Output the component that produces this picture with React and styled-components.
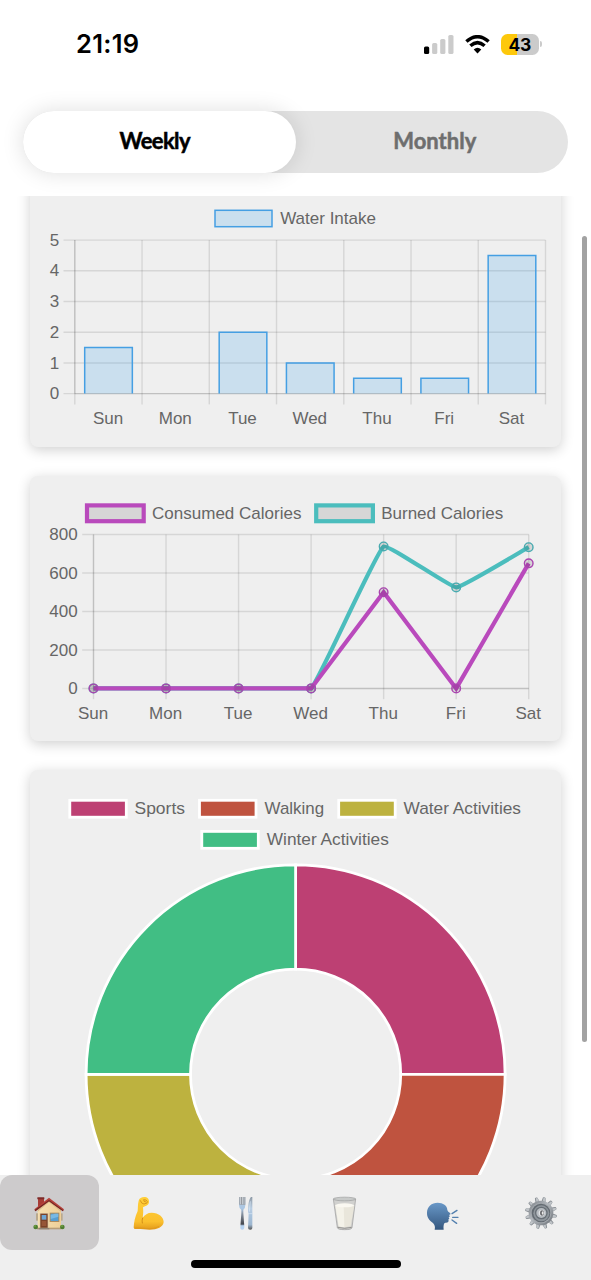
import React from "react";
import styled, { createGlobalStyle } from "styled-components";

const GlobalStyle = createGlobalStyle`
  * { box-sizing: border-box; }
  body { margin: 0; background: #fff; }
`;

const Screen = styled.div`
  position: relative;
  display: flex;
  flex-direction: column;
  width: 591px;
  height: 1280px;
  overflow: hidden;
  background: #fff;
  font-family: "Liberation Sans", Arial, sans-serif;
`;

const StatusBar = styled.header`
  display: flex;
  flex: none;
  align-items: center;
  justify-content: space-between;
  height: 88px;
  padding: 0 49px 0 76px;
`;

const Clock = styled.span`
  font: 600 25.5px/30px Inter, sans-serif;
  letter-spacing: 0.3px;
  color: #000;
`;

const StatusIcons = styled.div`
  display: flex;
  align-items: center;
  gap: 11px;
  svg { display: block; }
`;

const Battery = styled.div`
  display: flex;
  align-items: center;
  gap: 1.5px;
`;

const BatteryBody = styled.div`
  width: 37.5px;
  height: 21px;
  border-radius: 6.5px;
  background: linear-gradient(to right, #fdc80b ${(p) => p.$level}%, #cbcbcb ${(p) => p.$level}%);
  font: 700 17.5px/21px Inter, sans-serif;
  letter-spacing: -0.3px;
  text-align: center;
  color: #000;
`;

const BatteryCap = styled.div`
  width: 2px;
  height: 6px;
  border-radius: 0 2px 2px 0;
  background: #cbcbcb;
`;

const Toggle = styled.div`
  display: flex;
  flex: none;
  width: 545px;
  height: 62px;
  margin: 23px 0 22.5px 23px;
  border-radius: 31px;
  background: #e4e4e4;
`;

const ToggleOption = styled.button`
  flex: none;
  width: 50%;
  padding: ${(p) => (p.$active ? "0 9px 2px 0" : "0 0 2px 6px")};
  border: 0;
  border-radius: 31px;
  background: ${(p) => (p.$active ? "#fff" : "transparent")};
  box-shadow: ${(p) => (p.$active ? "0 0 22px rgba(0, 0, 0, 0.13)" : "none")};
  color: ${(p) => (p.$active ? "#000" : "#6e6e6e")};
  font: 700 22px/30px Lato, sans-serif;
  letter-spacing: ${(p) => (p.$active ? -0.6 : 0)}px;
  -webkit-text-stroke: 0.5px currentColor;
`;

const ScrollPane = styled.main`
  flex: 1;
  min-height: 0;
  overflow: hidden;
`;

const CardList = styled.div`
  display: flex;
  flex-direction: column;
  gap: 29.1px;
  margin-top: -14.2px;
  padding: 0 30px;
`;

const Card = styled.section`
  flex: none;
  height: ${(p) => p.$height}px;
  border-radius: 8px;
  background: #efefef;
  box-shadow: 0 3px 13px rgba(0, 0, 0, 0.19);
`;

const Chart = styled.svg`
  display: block;
  overflow: visible;
  font-family: "Liberation Sans", Arial, sans-serif;
  font-size: 17px;
  fill: #666;
`;

const ScrollThumb = styled.div`
  position: absolute;
  top: 235.5px;
  right: 4.5px;
  width: 4.5px;
  height: 806px;
  border-radius: 3px;
  background: #a2a2a2;
`;

const TabBar = styled.nav`
  display: flex;
  flex: none;
  flex-direction: column;
  align-items: center;
  justify-content: space-between;
  height: 105.5px;
  padding-bottom: 12px;
  background: #efefef;
`;

const Tabs = styled.div`
  display: flex;
  width: 100%;
`;

const Tab = styled.button`
  display: flex;
  flex: 1;
  align-items: center;
  justify-content: center;
  height: 75px;
  padding: 0;
  border: 0;
  border-radius: 12px;
  background: ${(p) => (p.$active ? "#cdcbcc" : "transparent")};
`;

const TabIcon = styled.svg`
  width: 34px;
  height: 34px;
  overflow: visible;
`;

const HomeIndicator = styled.div`
  width: 210px;
  height: 8px;
  border-radius: 4px;
  background: #000;
`;

const DAYS = ["Sun", "Mon", "Tue", "Wed", "Thu", "Fri", "Sat"];
const GRID = "rgba(0,0,0,0.1)";

function LegendItem({ x, y, w, h, fill, stroke, strokeWidth, label, labelX, labelWidth }) {
  return (
    <g>
      <rect x={x} y={y} width={w} height={h} fill={fill} stroke={stroke} strokeWidth={strokeWidth} />
      <text x={labelX} y={y + h / 2 + 5.6} textLength={labelWidth} lengthAdjust="spacingAndGlyphs">
        {label}
      </text>
    </g>
  );
}

function Grid({ area, columns, rows, max, labelGap }) {
  const { left, right, top, bottom } = area;
  return (
    <g stroke={GRID} strokeWidth="1.45">
      {Array.from({ length: columns + 1 }, (_, i) => {
        const x = left + ((right - left) * i) / columns;
        return <line key={i} x1={x} x2={x} y1={top} y2={bottom + 10.8} />;
      })}
      <line x1={left} x2={left} y1={top} y2={bottom} />
      <line x1={left} x2={right} y1={bottom} y2={bottom} />
      {Array.from({ length: rows + 1 }, (_, i) => {
        const y = bottom - ((bottom - top) * i) / rows;
        return (
          <g key={i}>
            <line x1={left - 11.3} x2={right} y1={y} y2={y} />
            <text x={left - labelGap} y={y + 5.6} textAnchor="end" stroke="none">
              {(max * i) / rows}
            </text>
          </g>
        );
      })}
    </g>
  );
}

function WaterChart() {
  const area = { left: 44.8, right: 515.5, top: 59.1, bottom: 212.6 };
  const values = [1.5, 0, 2, 1, 0.5, 0.5, 4.5];
  const col = (area.right - area.left) / values.length;
  const unit = (area.bottom - area.top) / 5;
  return (
    <Chart width="531" height="265">
      <LegendItem x={185} y={29.3} w={57} h={16.4} fill="rgba(54,162,235,0.2)" stroke="#459fe3"
        strokeWidth="1.5" label="Water Intake" labelX={250.2} labelWidth={95.8} />
      <Grid area={area} columns={7} rows={5} max={5} labelGap={15.6} />
      {values.map((v, i) => {
        const x = area.left + col * i + 9.9;
        const w = col - 19.6;
        const y = area.bottom - v * unit;
        return (
          <g key={DAYS[i]}>
            {v > 0 && (
              <>
                <rect x={x} y={y} width={w} height={area.bottom - y} fill="rgba(54,162,235,0.2)" />
                <path d={`M${x} ${area.bottom}V${y}H${x + w}V${area.bottom}`} fill="none" stroke="#459fe3" strokeWidth="1.5" />
              </>
            )}
            <text x={area.left + col * (i + 0.5) - 0.4} y={242.8} textAnchor="middle">{DAYS[i]}</text>
          </g>
        );
      })}
    </Chart>
  );
}

function smoothPath(points, area, tension) {
  const clampY = (y) => Math.min(area.bottom, Math.max(area.top, y));
  const controls = points.map((p, i) => {
    const prev = points[i - 1] || p;
    const next = points[i + 1] || p;
    const d0 = Math.hypot(p[0] - prev[0], p[1] - prev[1]);
    const d1 = Math.hypot(next[0] - p[0], next[1] - p[1]);
    const a = (tension * d0) / (d0 + d1);
    const b = (tension * d1) / (d0 + d1);
    const dx = next[0] - prev[0];
    const dy = next[1] - prev[1];
    return [p[0] - a * dx, clampY(p[1] - a * dy), p[0] + b * dx, clampY(p[1] + b * dy)];
  });
  return points
    .map((p, i) =>
      i === 0
        ? `M${p[0]} ${p[1]}`
        : `C${controls[i - 1][2]} ${controls[i - 1][3]} ${controls[i][0]} ${controls[i][1]} ${p[0]} ${p[1]}`
    )
    .join("");
}

function CaloriesChart() {
  const area = { left: 63.5, right: 498.7, top: 58.5, bottom: 212.4 };
  const series = [
    { color: "#4bbdbd", tension: 0.08, values: [0, 0, 0, 0, 738, 525, 734] },
    { color: "#b94abc", tension: 0, values: [0, 0, 0, 0, 500, 0, 650] },
  ].map((s) => ({
    ...s,
    points: s.values.map((v, i) => [
      area.left + ((area.right - area.left) * i) / 6,
      area.bottom - ((area.bottom - area.top) * v) / 800,
    ]),
  }));
  return (
    <Chart width="531" height="265">
      <LegendItem x={57} y={29.4} w={56.7} h={15.8} fill="rgba(0,0,0,0.1)" stroke="#b94abc"
        strokeWidth="4.2" label="Consumed Calories" labelX={122} labelWidth={149.5} />
      <LegendItem x={286.2} y={29.4} w={56.7} h={15.8} fill="rgba(0,0,0,0.1)" stroke="#4bbdbd"
        strokeWidth="4.2" label="Burned Calories" labelX={351.2} labelWidth={122} />
      <Grid area={area} columns={6} rows={4} max={800} labelGap={15.8} />
      {series.map((s) => (
        <g key={s.color} stroke={s.color}>
          <path d={smoothPath(s.points, area, s.tension)} fill="none" strokeWidth="4.2" strokeLinejoin="miter" />
          {s.points.map(([x, y]) => (
            <g key={x}>
              <circle cx={x} cy={y} r="4.3" fill="rgba(0,0,0,0.1)" strokeWidth="1.4" />
              <circle cx={x} cy={y} r="4.3" fill="none" stroke="rgba(70,50,90,0.14)" strokeWidth="1.2" />
            </g>
          ))}
        </g>
      ))}
      {DAYS.map((d, i) => (
        <text key={d} x={area.left + ((area.right - area.left) * i) / 6 - 0.4} y={242.5} textAnchor="middle">{d}</text>
      ))}
    </Chart>
  );
}

const ACTIVITIES = [
  { label: "Sports", color: "#bd4073", x: 39.8, y: 30.3, labelX: 104.5, labelWidth: 50.5 },
  { label: "Walking", color: "#bf533f", x: 169.5, y: 30.3, labelX: 234.6, labelWidth: 59.5 },
  { label: "Water Activities", color: "#bdb23f", x: 308.7, y: 30.3, labelX: 373.5, labelWidth: 117.5 },
  { label: "Winter Activities", color: "#41be84", x: 171.8, y: 61.4, labelX: 236.8, labelWidth: 122 },
];

function ActivityChart() {
  const cx = 265.6;
  const cy = 304.3;
  const outer = 209.5;
  const inner = 105.1;
  const at = (r, quarter) => {
    const a = ((quarter - 1) * Math.PI) / 2;
    return `${cx + r * Math.cos(a)} ${cy + r * Math.sin(a)}`;
  };
  return (
    <Chart width="531" height="540">
      {ACTIVITIES.map((a) => (
        <LegendItem key={a.label} {...a} w={56.5} h={16.9} fill={a.color} stroke="#fff" strokeWidth="2.8" />
      ))}
      {ACTIVITIES.map((a, i) => (
        <path
          key={a.label}
          d={`M${at(outer, i)}A${outer} ${outer} 0 0 1 ${at(outer, i + 1)}L${at(inner, i + 1)}A${inner} ${inner} 0 0 0 ${at(inner, i)}Z`}
          fill={a.color}
          stroke="#fff"
          strokeWidth="2.8"
        />
      ))}
    </Chart>
  );
}

function HouseIcon() {
  return (
    <TabIcon viewBox="0 0 102 102">
      <defs>
        <linearGradient id="wall" x2="1" y2="0"><stop stopColor="#f6dfb0" /><stop offset="1" stopColor="#eecf98" /></linearGradient>
      </defs>
      <rect x="18" y="9" width="18" height="27" fill="#a83c35" />
      <rect x="16" y="7" width="21" height="6" rx="1" fill="#7f2b29" />
      <path d="M17 43 51 15 87 43V101H17Z" fill="url(#wall)" />
      <path d="M17 50 51 22 87 50V43L51 15 17 43Z" fill="#d9b98b" />
      <path d="M51 8 96 43 93 49 51 19 10 49 7 43Z" fill="#b5413b" />
      <path d="M10 49 51 19 93 49 94 46 51 15 8 45Z" fill="#722622" />
      <rect x="12" y="55" width="6" height="22" fill="#b9a98e" />
      <rect x="87" y="55" width="5" height="22" fill="#b9a98e" />
      <rect x="23" y="54" width="26" height="46" fill="#dbc6a2" />
      <rect x="25" y="56" width="22" height="43" fill="#7a4228" />
      <rect x="29" y="60" width="14" height="14" fill="#6da5d4" />
      <rect x="29" y="78" width="14" height="15" fill="#965536" />
      <rect x="53" y="53" width="29" height="28" fill="#ad8a5c" />
      <rect x="56" y="56" width="23" height="22" fill="#569ed3" />
      <path d="M56 60 69 56H79V65L56 72Z" fill="#78b8e4" />
      <path d="M15 98H88V103H15Z" fill="#b69c78" />
      <path d="M20 99H52V103H20Z" fill="#8f8375" />
      <ellipse cx="11" cy="96" rx="7" ry="7" fill="#4e7e31" />
      <ellipse cx="91" cy="96" rx="7" ry="7" fill="#4e7e31" />
      <circle cx="9" cy="93" r="3" fill="#709f43" />
      <circle cx="90" cy="93" r="3" fill="#709f43" />
    </TabIcon>
  );
}

function ArmIcon() {
  return (
    <TabIcon viewBox="1 0 102 102">
      <defs>
        <linearGradient id="skin" x2="0" y2="1"><stop stopColor="#ffcf38" /><stop offset=".75" stopColor="#fbc02e" /><stop offset="1" stopColor="#e29a1b" /></linearGradient>
      </defs>
      <path d="M24 17C26 9 34 5 44 6C51 7 55 12 55 19C56 27 51 32 43 34L37 37C38 48 38 57 36 68C42 59 51 53 63 53C84 53 99 66 99 81C98 96 80 104 57 104C43 104 30 101 12 102Q9 101 9 97C10 80 13 65 21 48C22 36 21 29 24 17Z" fill="url(#skin)" />
      <path d="M29 17Q32 27 40 27L49 24Q52 19 46 15L39 14Q38 21 45 21" fill="none" stroke="#d18b18" strokeWidth="2.4" strokeLinecap="round" />
      <path d="M36 69C34 74 34 79 35 84" fill="none" stroke="#c77f12" strokeWidth="2.4" strokeLinecap="round" />
      <path d="M12 99C35 96 61 108 85 94" fill="none" stroke="#dc941d" strokeWidth="2" />
    </TabIcon>
  );
}

function CutleryIcon() {
  return (
    <TabIcon viewBox="0 0 102 102">
      <defs>
        <linearGradient id="handle" x2="0" y2="1"><stop stopColor="#b8c9da" /><stop offset=".36" stopColor="#a9c6e4" /><stop offset=".5" stopColor="#8996a5" /><stop offset=".83" stopColor="#44474d" /><stop offset=".88" stopColor="#b6d2ef" /></linearGradient>
        <linearGradient id="blade" x2="0" y2="1"><stop stopColor="#8e9aa6" /><stop offset=".35" stopColor="#b9cde2" /><stop offset=".55" stopColor="#a9c3dd" /><stop offset=".85" stopColor="#9db6cf" /><stop offset="1" stopColor="#555" /></linearGradient>
      </defs>
      <path d="M31 6H34V28H36V6H39V28H41V6H44V28H46V6H49V31Q49 40 43 44V54L46 95Q46 104 40 104Q33 104 34 95L37 54V44Q30 40 30 31Z" fill="url(#handle)" />
      <path d="M31 6H34V28H36V6H39V28H41V6H44V28H46V6H49V29H31Z" fill="#979ba0" />
      <path d="M70 6V99Q70 104 64 104Q57 104 57 98L59 55L57 51C57 34 59 12 66 6Z" fill="url(#blade)" />
      <path d="M61 50 64 19M59 56H70" stroke="#d8e8f7" strokeWidth="2" />
    </TabIcon>
  );
}

function MilkIcon() {
  return (
    <TabIcon viewBox="2 0 102 102">
      <path d="M18 12 30 98Q31 104 52 104Q73 104 74 98L85 12Z" fill="#d1d1cf" stroke="#989898" strokeWidth="2" />
      <path d="M24 31 34 94Q52 99 70 94L81 31Z" fill="#e9e6db" />
      <path d="M24 31 34 94Q42 97 51 97L49 31Z" fill="#f4f2e9" />
      <ellipse cx="52" cy="31" rx="28.5" ry="6" fill="#faf8f1" />
      <ellipse cx="51.5" cy="12" rx="33.5" ry="5.5" fill="#c8cac9" stroke="#9b9d9d" strokeWidth="2" />
      <path d="M31 97Q52 103 73 97" fill="none" stroke="#77746f" strokeWidth="2" />
    </TabIcon>
  );
}

function SpeakingIcon() {
  return (
    <TabIcon viewBox="1 0 102 102">
      <defs>
        <linearGradient id="head" x2="0" y2="1"><stop stopColor="#6998c8" /><stop offset="1" stopColor="#34577f" /></linearGradient>
      </defs>
      <path d="M27 104Q30 92 22 84C11 77 4 68 4 54C4 35 18 23 36 23C52 23 65 32 65 45Q65 49 74 55Q77 58 70 60L73 64 69 67 71 71Q66 72 69 78Q68 84 59 83Q52 84 54 104Z" fill="url(#head)" />
      <path d="M79 56 94 46M81 67H97M79 75 93 85" stroke="#527fae" strokeWidth="4" strokeLinecap="round" />
    </TabIcon>
  );
}

function GearIcon() {
  return (
    <TabIcon viewBox="3 0 102 102">
      <defs>
        <linearGradient id="steel" x2="1" y2="1"><stop stopColor="#777c82" /><stop offset=".45" stopColor="#b5babf" /><stop offset="1" stopColor="#686d73" /></linearGradient>
      </defs>
      {Array.from({ length: 12 }, (_, i) => (
        <g key={i} transform={`rotate(${i * 30 + 12} 51 54)`}>
          <path d="M45 22 47 7Q51 4 55 7L58 22Z" fill="#7f858b" />
          <path d="M48 22 49 8Q52 5 55 9L57 22Z" fill="#c0c4c8" />
        </g>
      ))}
      <circle cx="51" cy="54" r="37" fill="url(#steel)" />
      <circle cx="51" cy="54" r="31" fill="#a3a8ad" />
      <circle cx="51" cy="54" r="28" fill="#646b72" />
      <circle cx="52" cy="55" r="24" fill="#8e959b" />
      <circle cx="52" cy="54" r="19" fill="#686f76" />
      <circle cx="52" cy="54" r="15" fill="#b8bdc2" />
      <circle cx="53" cy="54" r="9" fill="#e2e4e6" />
      <ellipse cx="54" cy="54" rx="6" ry="8" fill="#626367" />
      <ellipse cx="56" cy="54" rx="3" ry="5" fill="#e9e9e9" />
    </TabIcon>
  );
}

const TABS = [
  ["home", HouseIcon],
  ["exercise", ArmIcon],
  ["food", CutleryIcon],
  ["drinks", MilkIcon],
  ["chat", SpeakingIcon],
  ["settings", GearIcon],
];

export default function App() {
  return (
    <Screen>
      <GlobalStyle />
      <StatusBar>
        <Clock>21:19</Clock>
        <StatusIcons>
          <svg width="30" height="19">
            <rect x="0" y="11.5" width="5.2" height="7.5" rx="1.6" fill="#000" />
            <rect x="8.1" y="8" width="5.2" height="11" rx="1.6" fill="#cbcbcb" />
            <rect x="16.2" y="4" width="5.2" height="15" rx="1.6" fill="#cbcbcb" />
            <rect x="24.3" y="0" width="5.2" height="19" rx="1.6" fill="#cbcbcb" />
          </svg>
          <svg width="25" height="19" viewBox="0 0 25 19">
            <path d="M1.4 6.5Q12.5-3.1 23.6 6.5M5.4 10.7Q12.5 4.5 19.6 10.7" fill="none" stroke="#000" strokeWidth="3.5" />
            <path d="M8.7 14.5Q12.5 11 16.3 14.5L12.5 18.5Z" />
          </svg>
          <Battery>
            <BatteryBody $level={43}>43</BatteryBody>
            <BatteryCap />
          </Battery>
        </StatusIcons>
      </StatusBar>
      <Toggle>
        <ToggleOption $active>Weekly</ToggleOption>
        <ToggleOption>Monthly</ToggleOption>
      </Toggle>
      <ScrollPane>
        <CardList>
          <Card $height={265.2}><WaterChart /></Card>
          <Card $height={265.2}><CaloriesChart /></Card>
          <Card $height={540}><ActivityChart /></Card>
        </CardList>
      </ScrollPane>
      <TabBar>
        <Tabs>
          {TABS.map(([name, Icon]) => (
            <Tab key={name} $active={name === "home"} aria-label={name}>
              <Icon />
            </Tab>
          ))}
        </Tabs>
        <HomeIndicator />
      </TabBar>
      <ScrollThumb />
    </Screen>
  );
}
